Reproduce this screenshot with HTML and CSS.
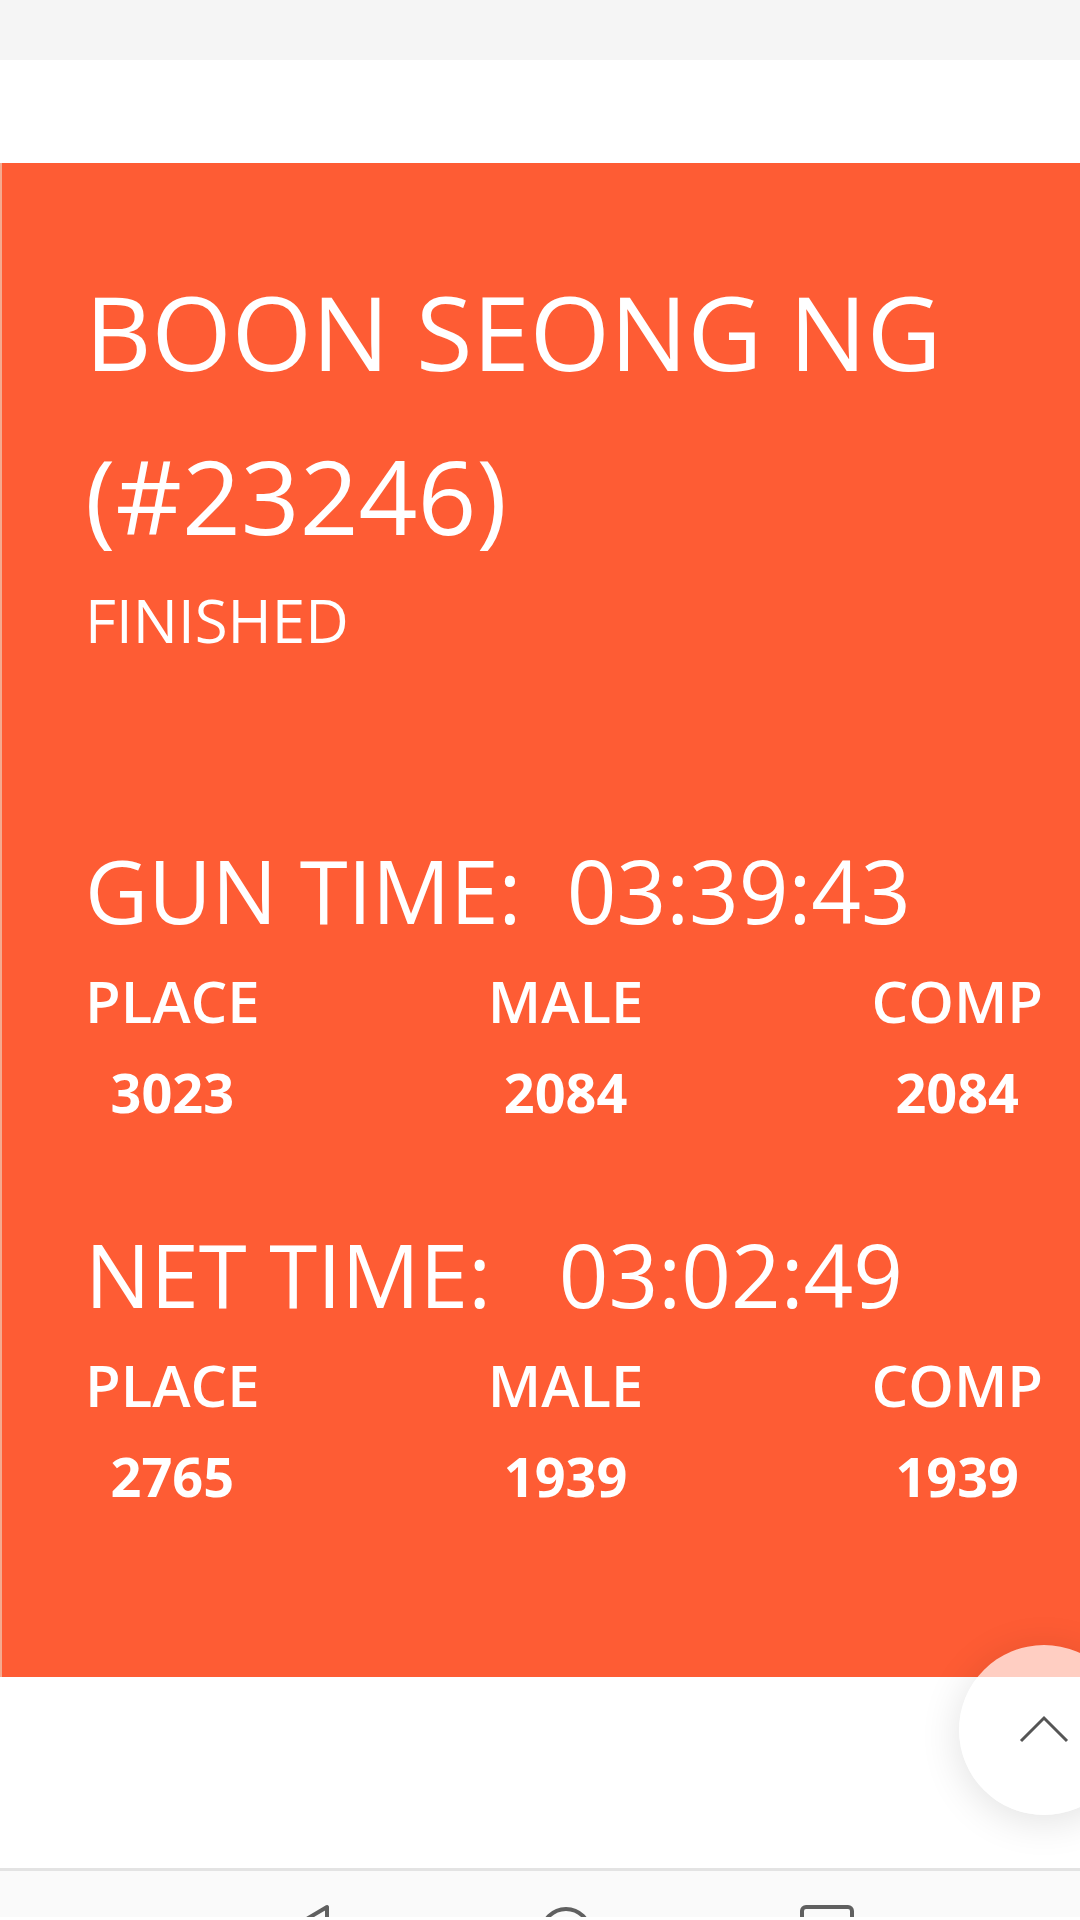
FILE: index.html
```html
<!DOCTYPE html>
<html lang="en">
    <head>
        <title>Race Result</title>
        <meta charset="utf-8">
        <link rel="stylesheet" href="styles.css">
    </head>

    <body>
        <div class="topbar"></div>
        <div class="spacer"></div>

        <section class="result">
            <h1 class="runner">BOON SEONG NG (#23246)</h1>
            <div class="status">FINISHED</div>

            <div class="time-block first">
                <h2 class="time">GUN TIME:&nbsp; 03:39:43</h2>
                <div class="ranks">
                    <div class="rank"><span class="label">PLACE</span><span class="value">3023</span></div>
                    <div class="rank"><span class="label">MALE</span><span class="value">2084</span></div>
                    <div class="rank"><span class="label">COMP</span><span class="value">2084</span></div>
                </div>
            </div>

            <div class="time-block second">
                <h2 class="time">NET TIME:&nbsp;&nbsp; 03:02:49</h2>
                <div class="ranks">
                    <div class="rank"><span class="label">PLACE</span><span class="value">2765</span></div>
                    <div class="rank"><span class="label">MALE</span><span class="value">1939</span></div>
                    <div class="rank"><span class="label">COMP</span><span class="value">1939</span></div>
                </div>
            </div>
        </section>

        <div class="footer-space"></div>

        <nav class="sysnav">
            <svg class="nav-icon" viewBox="0 0 60 60"><polygon points="52,4 52,56 8,30"/></svg>
            <svg class="nav-icon" viewBox="0 0 60 60"><circle cx="30" cy="30" r="24"/></svg>
            <svg class="nav-icon" viewBox="0 0 60 60"><rect x="5" y="4" width="50" height="50" rx="4"/></svg>
        </nav>

        <a class="to-top" href="#">
            <svg viewBox="0 0 50 28" width="50" height="28"><polyline points="2,26 25,3 48,26"/></svg>
        </a>
    </body>
</html>
```

FILE: styles.css
```css
*, *::before, *::after{
    box-sizing: border-box;
}

body{
    margin: 0;
    padding: 0;
    background: #ffffff;
    font-family: "Open Sans", "Liberation Sans", sans-serif;
    height: 1920px;
    overflow: hidden;
    position: relative;
}

.topbar{
    height: 60px;
    background: #f5f5f5;
}

.spacer{
    height: 103px;
}

.result{
    background: #fe5c34;
    border-left: 2px solid #f4a98f;
    color: #ffffff;
    padding: 86px 37px 164px 83px;
    height: 1514px;
}

.runner{
    margin: 0;
    font-size: 103px;
    font-weight: 400;
    line-height: 164px;
    width: 920px;
}

.status{
    margin-top: 8px;
    font-size: 60px;
    font-weight: 400;
    line-height: 70px;
}

.time-block.first{
    margin-top: 185px;
}

.time-block.second{
    margin-top: 97px;
}

.time{
    margin: 0;
    font-size: 87px;
    font-weight: 400;
    line-height: 100px;
    white-space: nowrap;
}

.ranks{
    display: flex;
    justify-content: space-between;
    margin-top: 26px;
}

.rank{
    display: flex;
    flex-direction: column;
    align-items: center;
    gap: 21px;
}

.label{
    font-size: 58px;
    font-weight: 600;
    line-height: 70px;
}

.value{
    font-size: 54px;
    font-weight: 700;
    line-height: 70px;
}

.footer-space{
    height: 191px;
}

.sysnav{
    border-top: 3px solid #e3e3e3;
    background: #fafafa;
    height: 49px;
    overflow: hidden;
    display: flex;
    gap: 201px;
    padding: 32px 0 0 275px;
}

.nav-icon{
    width: 60px;
    height: 60px;
    flex: none;
    fill: none;
    stroke: #606060;
    stroke-width: 4;
    stroke-linejoin: round;
}

.to-top{
    position: absolute;
    left: 959px;
    top: 1645px;
    width: 170px;
    height: 170px;
    border-radius: 50%;
    background: rgba(255,255,255,.7);
    box-shadow: 0 6px 40px rgba(0,0,0,.12);
    display: flex;
    align-items: center;
    justify-content: center;
}

.to-top svg{
    fill: none;
    stroke: #555555;
    stroke-width: 3;
    margin-top: -2px;
}
```
